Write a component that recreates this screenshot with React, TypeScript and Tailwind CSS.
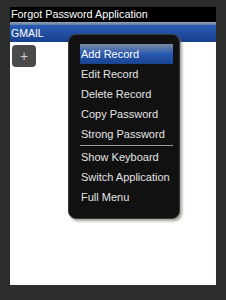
const TOP_ITEMS = ["Add Record", "Edit Record", "Delete Record", "Copy Password", "Strong Password"];
const BOTTOM_ITEMS = ["Show Keyboard", "Switch Application", "Full Menu"];

export default function App() {
  return (
    <div
      className="h-[300px] w-[226px] bg-[#2b2d2b] px-[10px] pt-[7px]"
      style={{ fontFamily: '"Liberation Sans", Arial, sans-serif' }}
    >
      <div className="relative h-[278px] w-[206px] bg-white">
        <div className="flex h-[15px] items-center bg-black pl-[1px] text-[10.8px] leading-none text-white">
          Forgot Password Application
        </div>
        <div className="h-[3px] bg-gradient-to-b from-[#9aa4b4] to-[#5a78a8]" />
        <div className="flex h-[17px] items-center bg-gradient-to-b from-[#2a5cb4] to-[#173f8c] pl-[1px] text-[10.5px] leading-none text-white">
          GMAIL
        </div>
        <div className="ml-[2px] mt-[3px] flex h-[22px] w-[24px] items-center justify-center rounded-[4px] bg-[#4a4a4a] text-[14px] leading-none text-[#d0d0d0]">
          +
        </div>

        <div className="absolute left-[58px] top-[27px] w-[112px] rounded-[8px] border border-[#3a3a3a] bg-[#111111] pb-[11px] pl-[11px] pr-[6px] pt-[9px] shadow-[2px_2px_3px_rgba(90,100,80,0.6)]">
          {TOP_ITEMS.map((t, i) => (
            <MenuItem key={t} label={t} active={i === 0} />
          ))}
          <div className="my-[1px] h-px bg-[#9a9a9a]" />
          {BOTTOM_ITEMS.map((t) => (
            <MenuItem key={t} label={t} />
          ))}
        </div>
      </div>
    </div>
  );
}

function MenuItem({ label, active }: { label: string; active?: boolean }) {
  return (
    <div
      className={`flex h-[20px] items-center whitespace-nowrap pl-[1px] text-[11px] leading-none text-[#e4e4e4] ${
        active ? "bg-gradient-to-b from-[#7a8aa4] via-[#2658b0] to-[#1a4490] text-white" : ""
      }`}
    >
      {label}
    </div>
  );
}
